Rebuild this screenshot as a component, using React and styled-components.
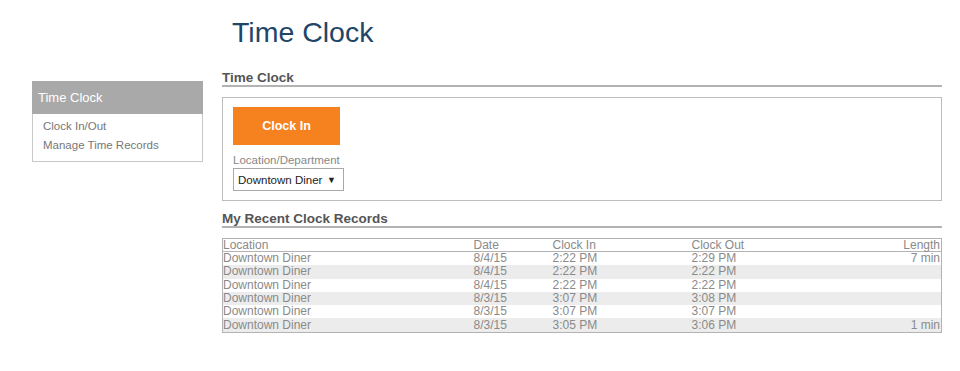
import styled, { createGlobalStyle } from 'styled-components'

const GlobalStyle = createGlobalStyle`
  html, body {
    margin: 0;
    padding: 0;
    background: #ffffff;
    font-family: "Liberation Sans", Arial, sans-serif;
  }
`

const Page = styled.div`
  width: 960px;
  height: 371px;
  box-sizing: border-box;
  padding: 16px 0 0 32px;
  display: flex;
  gap: 19px;
  align-items: flex-start;
`

const Sidebar = styled.aside`
  width: 171px;
  margin-top: 65px;
  box-sizing: border-box;
  border: 1px solid #c8c8c8;
  border-top: none;
`

const SideHeader = styled.div`
  height: 33px;
  margin: 0 -1px;
  padding-left: 6px;
  background: #a9a9a9;
  color: #ffffff;
  font-size: 13px;
  line-height: 33px;
`

const SideList = styled.div`
  padding: 3px 0 6px 10px;
`

const SideItem = styled.div`
  font-size: 11.5px;
  line-height: 19px;
  color: #777777;
  cursor: pointer;
`

const Main = styled.main`
  width: 720px;
`

const Title = styled.h1`
  margin: 0 0 23px 10px;
  font-size: 28.5px;
  line-height: 32px;
  font-weight: normal;
  color: #1f4669;
`

const SectionTitle = styled.h2`
  margin: 0 0 10px;
  font-size: 13.5px;
  line-height: 14px;
  font-weight: bold;
  color: #555555;
  border-bottom: 2px solid #b3b3b3;
`

const Panel = styled.section`
  border: 1px solid #bdbdbd;
  padding: 9px 10px 9px;
  margin-bottom: 11px;
`

const ClockButton = styled.button`
  width: 107px;
  height: 38px;
  border: none;
  background: #f5821f;
  color: #ffffff;
  font-family: inherit;
  font-size: 12.5px;
  font-weight: bold;
  cursor: pointer;
`

const Label = styled.div`
  margin-top: 8px;
  font-size: 11.5px;
  line-height: 14px;
  color: #888888;
`

const Select = styled.div`
  margin-top: 1px;
  width: 111px;
  height: 23px;
  box-sizing: border-box;
  border: 1px solid #a9a9a9;
  padding: 0 7px 0 4px;
  display: flex;
  align-items: center;
  justify-content: space-between;
  font-size: 11.5px;
  color: #222222;
`

const Caret = styled.span`
  font-size: 9px;
`

const Table = styled.table`
  width: 720px;
  border-collapse: collapse;
  table-layout: fixed;
  border: 1px solid #b3b3b3;
  font-size: 12px;
  color: #8a8a8a;
`

const HeadCell = styled.th`
  padding: 0 1px 0 0;
  height: 12px;
  line-height: 12px;
  font-weight: normal;
  text-align: ${({ $right }) => ($right ? 'right' : 'left')};
  border-bottom: 1px solid #b3b3b3;
`

const Row = styled.tr`
  background: ${({ $shade }) => ($shade ? '#ececec' : '#ffffff')};
`

const Cell = styled.td`
  padding: 0 1px 0 0;
  height: 13.3px;
  line-height: 13px;
  text-align: ${({ $right }) => ($right ? 'right' : 'left')};
  white-space: nowrap;
`

const records = [
  { date: '8/4/15', inAt: '2:22 PM', outAt: '2:29 PM', length: '7 min' },
  { date: '8/4/15', inAt: '2:22 PM', outAt: '2:22 PM', length: '' },
  { date: '8/4/15', inAt: '2:22 PM', outAt: '2:22 PM', length: '' },
  { date: '8/3/15', inAt: '3:07 PM', outAt: '3:08 PM', length: '' },
  { date: '8/3/15', inAt: '3:07 PM', outAt: '3:07 PM', length: '' },
  { date: '8/3/15', inAt: '3:05 PM', outAt: '3:06 PM', length: '1 min' },
]

const App = () => {
  return (
    <>
      <GlobalStyle />
      <Page>
        <Sidebar>
          <SideHeader>Time Clock</SideHeader>
          <SideList>
            <SideItem>Clock In/Out</SideItem>
            <SideItem>Manage Time Records</SideItem>
          </SideList>
        </Sidebar>

        <Main>
          <Title>Time Clock</Title>

          <SectionTitle>Time Clock</SectionTitle>
          <Panel>
            <ClockButton>Clock In</ClockButton>
            <Label>Location/Department</Label>
            <Select>
              Downtown Diner
              <Caret>▼</Caret>
            </Select>
          </Panel>

          <SectionTitle>My Recent Clock Records</SectionTitle>
          <Table>
            <colgroup>
              <col style={{ width: '251px' }} />
              <col style={{ width: '79px' }} />
              <col style={{ width: '139px' }} />
              <col />
              <col style={{ width: '80px' }} />
            </colgroup>
            <thead>
              <tr>
                <HeadCell>Location</HeadCell>
                <HeadCell>Date</HeadCell>
                <HeadCell>Clock In</HeadCell>
                <HeadCell>Clock Out</HeadCell>
                <HeadCell $right>Length</HeadCell>
              </tr>
            </thead>
            <tbody>
              {records.map((r, i) => (
                <Row key={i} $shade={i % 2 === 1}>
                  <Cell>Downtown Diner</Cell>
                  <Cell>{r.date}</Cell>
                  <Cell>{r.inAt}</Cell>
                  <Cell>{r.outAt}</Cell>
                  <Cell $right>{r.length}</Cell>
                </Row>
              ))}
            </tbody>
          </Table>
        </Main>
      </Page>
    </>
  )
}

export default App
